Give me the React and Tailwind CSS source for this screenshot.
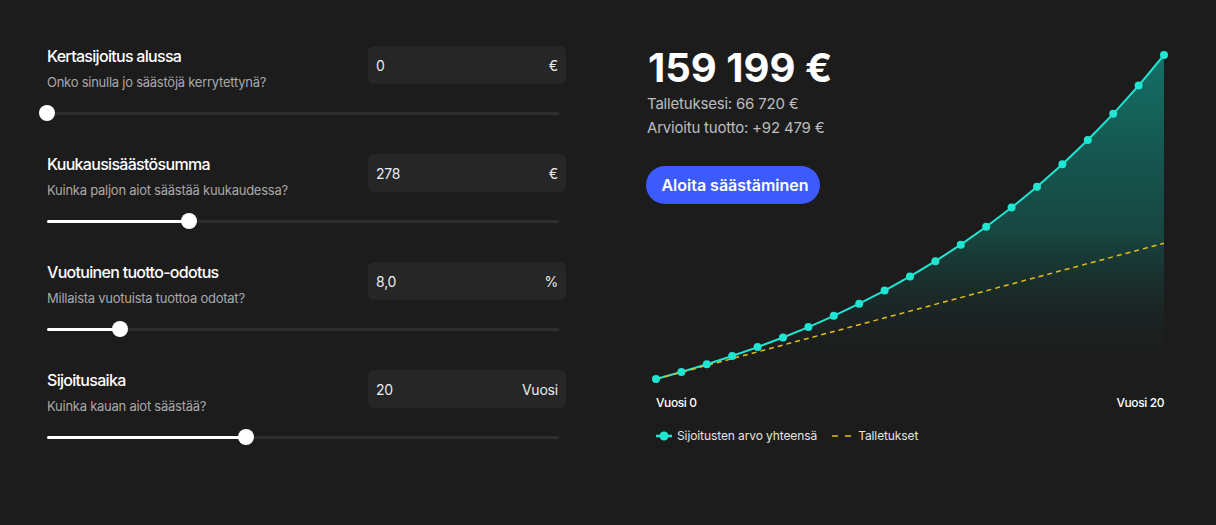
import React from "react";

const m = Math.pow(1.08, 1 / 12) - 1;
const values = Array.from({ length: 21 }, (_, k) =>
  k === 0 ? 0 : 278 * ((Math.pow(1 + m, 12 * k) - 1) / m) * (1 + m)
);
const maxV = values[20];
const W = 508;
const H = 324;
const O = 8;
const px = (k) => O + (k * W) / 20;
const py = (v) => O + H - (v / maxV) * H;

const fields = [
  { title: "Kertasijoitus alussa", sub: "Onko sinulla jo säästöjä kerrytettynä?", value: "0", unit: "€", pct: 0 },
  { title: "Kuukausisäästösumma", sub: "Kuinka paljon aiot säästää kuukaudessa?", value: "278", unit: "€", pct: 27.8 },
  { title: "Vuotuinen tuotto-odotus", sub: "Millaista vuotuista tuottoa odotat?", value: "8,0", unit: "%", pct: 14.3 },
  { title: "Sijoitusaika", sub: "Kuinka kauan aiot säästää?", value: "20", unit: "Vuosi", pct: 38.8 },
];

function Field({ f }) {
  return (
    <div className="flex flex-col">
      <div className="flex justify-between">
        <div className="flex flex-col">
          <div className="text-[16px] leading-[20px] font-medium text-white tracking-[-0.7px]">{f.title}</div>
          <div className="mt-[6px] text-[13px] leading-[20px] text-[#a9a9a9] tracking-[-0.25px]">{f.sub}</div>
        </div>
        <div className="w-[198px] h-[38px] rounded-md bg-[#262626] flex items-center justify-between px-[8px] text-[14px] text-[#ececec] tracking-[-0.2px]">
          <span>{f.value}</span>
          <span>{f.unit}</span>
        </div>
      </div>
      <div className="relative mt-[13px] h-[16px] w-[512px]">
        <div className="absolute left-0 right-0 top-[6.5px] h-[3px] rounded-full bg-[#2e2e2e]" />
        <div
          className="absolute left-0 top-[6.5px] h-[3px] rounded-full bg-white"
          style={{ width: `${f.pct}%` }}
        />
        <div
          className="absolute top-0 h-[16px] w-[16px] -ml-[8px] rounded-full bg-white"
          style={{ left: `${f.pct}%` }}
        />
      </div>
    </div>
  );
}

function Chart() {
  const line = values.map((v, k) => `${k === 0 ? "M" : "L"}${px(k).toFixed(2)},${py(v).toFixed(2)}`).join(" ");
  const area = `${line} L${px(20)},${O + H} L${px(0)},${O + H} Z`;
  return (
    <svg width="524" height="340" className="overflow-visible">
      <defs>
        <linearGradient id="g" x1="0" y1="0" x2="0" y2="1">
          <stop offset="0" stopColor="#137066" stopOpacity="1" />
          <stop offset="0.55" stopColor="#146259" stopOpacity="0.6" />
          <stop offset="1" stopColor="#1c1c1c" stopOpacity="0" />
        </linearGradient>
      </defs>
      <path d={area} fill="url(#g)" />
      <path d={line} fill="none" stroke="#1fe6d3" strokeWidth="2" />
      <line
        x1={px(0)}
        y1={py(0)}
        x2={px(20)}
        y2={py(66720)}
        stroke="#e6bd12"
        strokeWidth="1.5"
        strokeDasharray="5 4"
      />
      {values.map((v, k) => (
        <circle key={k} cx={px(k)} cy={py(v)} r="4" fill="#1fe6d3" />
      ))}
    </svg>
  );
}

export default function App() {
  return (
    <div
      className="w-[1216px] h-[525px] bg-[#1c1c1c] flex pt-[46px] pl-[47px]"
      style={{ fontFamily: "Inter, 'Noto Sans', sans-serif" }}
    >
      <div className="w-[519px] flex flex-col gap-[33px]">
        {fields.map((f) => (
          <Field key={f.title} f={f} />
        ))}
      </div>
      <div className="ml-[82px] flex flex-col">
        <div className="grid">
          <div className="col-start-1 row-start-1 flex flex-col items-start">
            <div className="text-[40px] leading-[44px] font-bold text-white">159 199 €</div>
            <div className="mt-[2px] -ml-[1px] text-[15px] leading-[24px] text-[#bdbdbd] tracking-[-0.2px]">Talletuksesi: 66 720 €</div>
            <div className="-ml-[1px] text-[15px] leading-[24px] text-[#bdbdbd] tracking-[-0.2px]">Arvioitu tuotto: +92 479 €</div>
            <button className="mt-[26px] -ml-[2px] h-[38px] w-[174px] rounded-full bg-[#3d5afe] text-white text-[16px] font-semibold pl-[4px]">
              Aloita säästäminen
            </button>
          </div>
          <div className="col-start-1 row-start-1 mt-[1px]">
            <Chart />
          </div>
        </div>
        <div className="ml-[8px] mt-[8px] w-[508px] flex justify-between text-[12px] leading-[16px] font-medium text-white tracking-[-0.4px]">
          <span>Vuosi 0</span>
          <span>Vuosi 20</span>
        </div>
        <div className="ml-[8px] mt-[17px] flex items-center text-[12px] leading-[16px] text-[#e4e4e4] tracking-[-0.1px]">
          <svg width="16" height="10" className="mr-[5px]">
            <line x1="0" y1="5" x2="16" y2="5" stroke="#1fe6d3" strokeWidth="2.5" />
            <circle cx="8" cy="5" r="4.5" fill="#1fe6d3" />
          </svg>
          <span>Sijoitusten arvo yhteensä</span>
          <svg width="20" height="10" className="ml-[15px] mr-[6px]">
            <line x1="0" y1="5" x2="20" y2="5" stroke="#e6bd12" strokeWidth="1.5" strokeDasharray="6 7" />
          </svg>
          <span>Talletukset</span>
        </div>
      </div>
    </div>
  );
}
